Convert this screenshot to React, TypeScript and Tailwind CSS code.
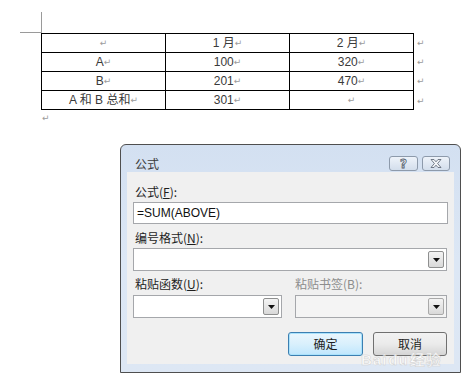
import React from "react";

const Mk = () => (
  <span className="font-['DejaVu_Sans'] text-[9px] text-[#9b9b9b] leading-none align-middle">↵</span>
);

const Cell = ({ children }: { children?: React.ReactNode }) => (
  <td className="border border-black h-[19px] p-0 text-center align-middle leading-[18px]">
    {children}
    <Mk />
  </td>
);

const Arrow = ({ disabled }: { disabled?: boolean }) => (
  <div
    className={`w-[16px] flex items-center justify-center border ${
      disabled ? "border-[#a9a9a9]" : "border-[#8e8f8f]"
    } bg-gradient-to-b from-[#f4f4f4] to-[#d9d9d9] rounded-[2px]`}
  >
    <svg width="7" height="4" viewBox="0 0 7 4">
      <path d="M0 0 H7 L3.5 4 Z" fill="#111" />
    </svg>
  </div>
);

const Combo = ({ w, disabled }: { w: string; disabled?: boolean }) => (
  <div
    className={`${w} h-[23px] border border-[#a5a7ab] ${
      disabled ? "bg-[#f4f4f4]" : "bg-white"
    } flex justify-end p-[2px]`}
  >
    <Arrow disabled={disabled} />
  </div>
);

export default function App() {
  return (
    <div className="w-[473px] h-[390px] bg-white relative overflow-hidden font-['Liberation_Sans','Noto_Sans_CJK_SC',sans-serif]">
      {/* crop marks */}
      <div className="absolute left-[41px] top-[12px] w-px h-[21px] bg-[#9a9a9a]" />
      <div className="absolute left-[20px] top-[32px] w-[21px] h-px bg-[#9a9a9a]" />

      <div className="pt-[33px] pl-[41px]">
        <div className="flex items-start">
          <table className="border-collapse w-[373px] text-[12px] text-[#3a3a3a] table-fixed">
            <tbody>
              <tr>
                <Cell />
                <Cell>1 月</Cell>
                <Cell>2 月</Cell>
              </tr>
              <tr>
                <Cell>A</Cell>
                <Cell>100</Cell>
                <Cell>320</Cell>
              </tr>
              <tr>
                <Cell>B</Cell>
                <Cell>201</Cell>
                <Cell>470</Cell>
              </tr>
              <tr>
                <Cell>A 和 B 总和</Cell>
                <Cell>301</Cell>
                <Cell />
              </tr>
            </tbody>
          </table>
          <div className="ml-[3px] flex flex-col">
            <div className="h-[19px] leading-[19px]"><Mk /></div>
            <div className="h-[19px] leading-[19px]"><Mk /></div>
            <div className="h-[20px] leading-[20px]"><Mk /></div>
            <div className="h-[19px] leading-[19px]"><Mk /></div>
          </div>
        </div>
        <div className="h-[16px] leading-[16px] pl-[1px]"><Mk /></div>
      </div>

      {/* dialog */}
      <div className="ml-[120px] mt-[18px] w-[341px] h-[229px] border border-[#4f4f4f] rounded-t-[6px] bg-gradient-to-b from-[#d3e0f1] via-[#dce7f5] to-[#dde7f4] flex flex-col px-[6px] pb-[8px] relative">
        <div className="h-[27px] pt-[10px] flex items-center pl-[8px] pr-[4px]">
          <div className="h-[17px] flex items-center flex-1 text-[12px] text-[#3a3a3a] font-['Noto_Sans_CJK_SC',sans-serif]">
            公式
          </div>
          <div className="flex gap-[4px] items-center">
            <div className="w-[29px] h-[15px] border border-[#8d9aab] rounded-[3px] bg-gradient-to-b from-[#eef3fa] to-[#d3deec] flex items-center justify-center">
              <span className="text-[12px] leading-none font-bold text-[#e9eef5] [-webkit-text-stroke:0.8px_#55606e] font-['DejaVu_Sans']">?</span>
            </div>
            <div className="w-[28px] h-[15px] border border-[#8d9aab] rounded-[3px] bg-gradient-to-b from-[#eef3fa] to-[#d3deec] flex items-center justify-center">
              <svg width="12" height="9" viewBox="0 0 12 9">
                <path
                  d="M1 0.5 H4 L6 2.8 L8 0.5 H11 L7.6 4.5 L11 8.5 H8 L6 6.2 L4 8.5 H1 L4.4 4.5 Z"
                  fill="#f4f6f9"
                  stroke="#55606e"
                  strokeWidth="0.8"
                />
              </svg>
            </div>
          </div>
        </div>

        <div className="flex-1 bg-[#f0f0f0] flex flex-col pt-[12px] px-[6px] pb-[7px] text-[12px] text-[#1e1e1e] font-['Noto_Sans_CJK_SC','Liberation_Sans',sans-serif]">
          <div className="h-[15px] leading-[15px] pl-[2px]">
            公式(<span className="underline">F</span>):
          </div>
          <div className="mt-[3px] h-[22px] border border-[#a5a7ab] bg-white flex items-center pl-[3px] text-[12px] text-[#111] font-['Liberation_Sans',sans-serif]">
            =SUM(ABOVE)
          </div>
          <div className="mt-[6px] h-[15px] leading-[15px] pl-[2px]">
            编号格式(<span className="underline">N</span>):
          </div>
          <div className="mt-[3px]">
            <Combo w="w-[314px]" />
          </div>
          <div className="mt-[5px] h-[15px] leading-[15px] flex">
            <div className="w-[162px] pl-[2px]">
              粘贴函数(<span className="underline">U</span>):
            </div>
            <div className="text-[#8d8d8d]">粘贴书签(B):</div>
          </div>
          <div className="mt-[4px] flex gap-[13px]">
            <Combo w="w-[149px]" />
            <Combo w="w-[152px]" disabled />
          </div>
          <div className="mt-[14px] flex justify-end gap-[10px] pr-[1px]">
            <div className="w-[75px] h-[24px] border border-[#3c7fb1] rounded-[3px] bg-gradient-to-b from-[#eaf6fd] via-[#d9f0fc] to-[#bee6fd] shadow-[inset_0_0_0_1px_#a9e2fc] flex items-center justify-center">
              确定
            </div>
            <div className="w-[74px] h-[24px] border border-[#707070] rounded-[3px] bg-gradient-to-b from-[#f2f2f2] via-[#ebebeb] to-[#d5d5d5] flex items-center justify-center">
              取消
            </div>
          </div>
        </div>

        <div className="absolute left-[240px] top-[207px] text-[15px] font-bold text-white/80 [-webkit-text-stroke:0.5px_#cfcfcf] font-['Liberation_Sans','Noto_Sans_CJK_SC',sans-serif] tracking-[1px] leading-none">
          Bai<span className="mx-[1px]">du</span>经验
        </div>
      </div>
    </div>
  );
}
